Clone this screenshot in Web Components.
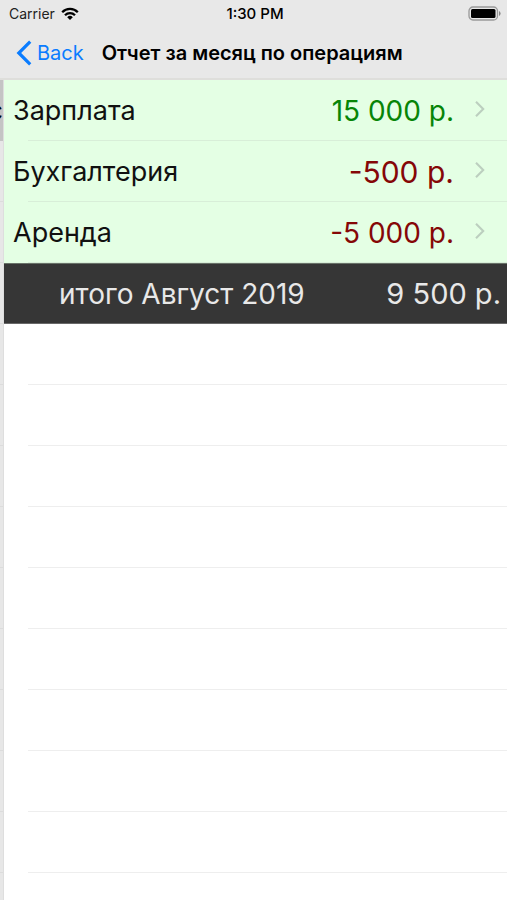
<!DOCTYPE html>
<html lang="ru">
<head>
<meta charset="utf-8">
<meta name="viewport" content="width=device-width, initial-scale=1">
<title>Отчет за месяц по операциям</title>
<style>
  body { margin: 0; background: #fff; font-family: Inter, "Liberation Sans", sans-serif; color: #000; }
</style>
</head>
<body>
<report-screen></report-screen>

<script>
class BaseElement extends HTMLElement {
  constructor() {
    super();
    this.attachShadow({ mode: 'open' });
  }
  connectedCallback() {
    this.shadowRoot.innerHTML = this.render();
  }
}

customElements.define('status-bar', class extends BaseElement {
  render() {
    return `
      <style>
        :host { display: grid; grid-template-columns: 1fr auto 1fr; align-items: center;
                height: 27px; padding: 0 6px 0 9px; font-size: 14px; line-height: 16px; }
        .left { display: flex; align-items: center; gap: 6px; color: #222; }
        .time { font-size: 15px; font-weight: 500; color: #000; }
        .battery { justify-self: end; }
        svg { display: block; }
      </style>
      <span class="left"><span>Carrier</span>
        <svg width="18" height="14" viewBox="0 0 18 14" aria-label="Wi-Fi">
          <g fill="none" stroke="#000" stroke-width="2.3">
            <path d="M1.2 5.2a11 11 0 0 1 15.6 0"/>
            <path d="M4 8.2a7 7 0 0 1 10 0"/>
          </g>
          <path d="M9 13 6.2 10.2a4 4 0 0 1 5.6 0z"/>
        </svg>
      </span>
      <span class="time">1:30 PM</span>
      <svg class="battery" width="33" height="16" viewBox="0 0 33 16" aria-label="Battery">
        <rect x="1" y="1" width="28.5" height="13" rx="4" fill="none" stroke="#999" stroke-width="1.3"/>
        <rect x="3" y="3" width="24.5" height="9" rx="1.5" fill="#000"/>
        <path d="M31 5.1q1.6.8 1.6 2.4T31 9.9z" fill="#888"/>
      </svg>`;
  }
});

customElements.define('nav-bar', class extends BaseElement {
  render() {
    return `
      <style>
        :host { display: flex; align-items: center; gap: 18px; height: 51px; padding: 0 16px; border-bottom: 2px solid #dededb; }
        button { display: flex; align-items: center; gap: 5px; margin: 0; padding: 0; border: 0; background: none;
                 font: 400 20px/24px Inter, "Liberation Sans", sans-serif; color: #0a7cff; cursor: pointer; }
        h1 { margin: 0; font-size: 20px; line-height: 24px; font-weight: 600; white-space: nowrap; }
        svg { display: block; }
      </style>
      <button type="button">
        <svg width="16" height="26" viewBox="0 0 16 26" aria-hidden="true">
          <path d="M14.2 1.6 2.8 13l11.4 11.4" fill="none" stroke="#0a7cff" stroke-width="3.2"/>
        </svg><span>Back</span>
      </button>
      <h1><slot></slot></h1>`;
  }
});

customElements.define('operation-row', class extends BaseElement {
  render() {
    const tone = this.getAttribute('tone');
    const size = this.hasAttribute('large') ? 30 : 28;
    return `
      <style>
        :host { display: block; background: #e4ffe4; }
        a { display: flex; align-items: center; height: 61px; padding: 0 21px 0 9px;
            color: #111; text-decoration: none; font-size: 27px; line-height: 34px;
            background: linear-gradient(#d8eed8, #d8eed8) 24px 100% / 100% 1px no-repeat; }
        .name { flex: 1; }
        .amount { margin-right: 20px; white-space: nowrap; color: ${tone === 'income' ? '#078507' : '#850707'};
                  font-size: ${size}px; }
        svg { display: block; margin-bottom: 3px; }
      </style>
      <a href="#operation">
        <span class="name"><slot></slot></span>
        <span class="amount"><slot name="amount"></slot></span>
        <svg width="12" height="18" viewBox="0 0 12 18" aria-hidden="true">
          <path d="M2 1.8 9.2 9 2 16.2" fill="none" stroke="#bccfbf" stroke-width="2.1"/>
        </svg>
      </a>`;
  }
});

customElements.define('total-row', class extends BaseElement {
  render() {
    return `
      <style>
        :host { display: flex; align-items: center; justify-content: space-between; box-sizing: border-box; height: 61px;
                padding: 0 6px 0 55px; background: #363636; color: #e8e8e8; font-size: 28px; line-height: 34px;
                border-top: 1px solid #687268; border-bottom: 1px solid #686868; }
        .amount { font-size: 29px; white-space: nowrap; }
      </style>
      <span><slot></slot></span>
      <span class="amount"><slot name="amount"></slot></span>`;
  }
});

customElements.define('empty-rows', class extends BaseElement {
  render() {
    return `
      <style>
        :host { display: block; min-height: 61px; margin-left: 24px;
                background: repeating-linear-gradient(#fff 0 60px, #eee 60px 61px); }
      </style>`;
  }
});

customElements.define('previous-screen', class extends BaseElement {
  render() {
    return `
      <style>
        :host { display: block; overflow: hidden; background: repeating-linear-gradient(#e7e7e7 0 60px, #dcdcdc 60px 61px);
                border-right: 1px solid #dedede; }
        .selected { display: flex; justify-content: flex-end; align-items: center; height: 61px;
                    background: #c4c4c4; font-size: 27px; line-height: 34px; }
      </style>
      <div class="selected"><slot></slot></div>`;
  }
});

customElements.define('report-screen', class extends BaseElement {
  render() {
    return `
      <style>
        :host { display: flex; flex-direction: column; min-height: 100vh; }
        header { background: #e8e8e8; }
        main { flex: 1; display: grid; grid-template-columns: 4px 1fr; }
        .report { display: flex; flex-direction: column; min-width: 0; }
        empty-rows { flex: 1; }
      </style>
      <header>
        <status-bar></status-bar>
        <nav-bar>Отчет за месяц по операциям</nav-bar>
      </header>
      <main>
        <previous-screen>с</previous-screen>
        <section class="report">
          <operation-row tone="income">Зарплата<span slot="amount">15 000 р.</span></operation-row>
          <operation-row tone="expense" large>Бухгалтерия<span slot="amount">-500 р.</span></operation-row>
          <operation-row tone="expense">Аренда<span slot="amount">-5 000 р.</span></operation-row>
          <total-row>итого Август 2019<span slot="amount">9 500 р.</span></total-row>
          <empty-rows></empty-rows>
        </section>
      </main>`;
  }
});
</script>
</body>
</html>
